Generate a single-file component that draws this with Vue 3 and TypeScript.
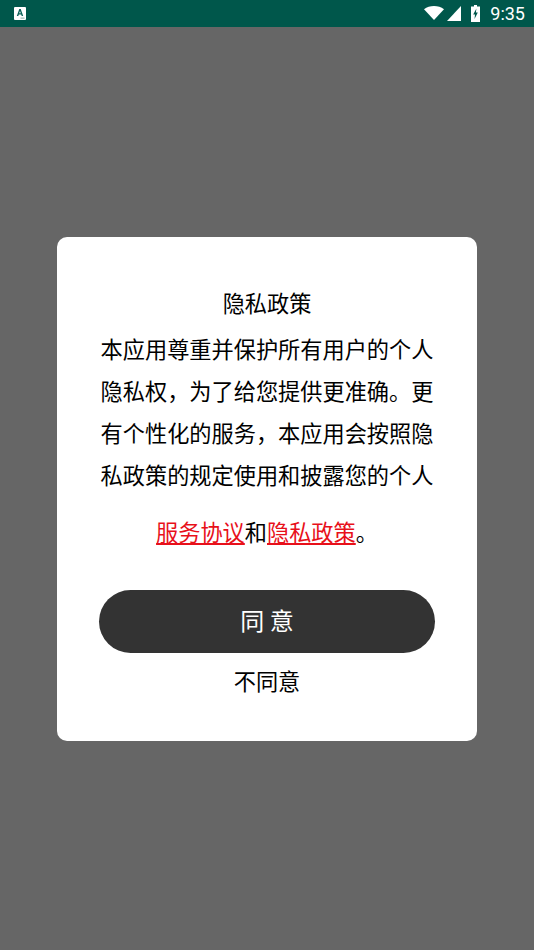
<script setup lang="ts">
const lines: string[] = [
  '本应用尊重并保护所有用户的个人',
  '隐私权，为了给您提供更准确。更',
  '有个性化的服务，本应用会按照隐',
  '私政策的规定使用和披露您的个人',
]
</script>

<template>
  <div class="screen">
    <header class="status">
      <span class="notif">
        <svg width="12" height="13" viewBox="0 0 12 13">
          <rect x="0" y="0" width="12" height="13" rx="1" fill="#fff" />
          <path d="M2.8 9 L5.3 2 H6.7 L9.2 9 H7.7 L7.2 7.5 H4.8 L4.3 9 Z M5.2 6.2 H6.8 L6 3.9 Z" fill="#0a5f57" fill-rule="evenodd" />
          <rect x="6.5" y="10.6" width="4" height="1" fill="#8aa8a4" />
        </svg>
      </span>
      <span class="right">
        <svg class="wifi" width="20" height="14" viewBox="0 0 20 14">
          <path d="M0 3.2 C5.6 -1 14.4 -1 20 3.2 L10 14 Z" fill="#fff" />
        </svg>
        <svg class="signal" width="14" height="15" viewBox="0 0 14 15">
          <path d="M14 0 V15 H0 Z" fill="#fff" />
        </svg>
        <svg class="battery" width="9" height="17" viewBox="0 0 9 17">
          <path d="M3 0 H6 V1.5 H9 V17 H0 V1.5 H3 Z" fill="#fff" />
          <path d="M5.4 3.5 L2.2 9.6 H4 L3.5 14 L6.8 7.6 H4.9 Z" fill="#00574b" />
        </svg>
        <span class="time">9:35</span>
      </span>
    </header>
    <main class="overlay">
      <section class="card">
        <h1 class="title">隐私政策</h1>
        <div class="body">
          <p v-for="line in lines" :key="line" class="line">{{ line }}</p>
        </div>
        <p class="links"><a class="link">服务协议</a>和<a class="link">隐私政策</a>。</p>
        <button class="agree">同 意</button>
        <button class="decline">不同意</button>
      </section>
    </main>
  </div>
</template>

<style>
html, body { margin: 0; padding: 0; }
</style>

<style scoped>
.screen {
  width: 534px;
  height: 950px;
  display: flex;
  flex-direction: column;
  overflow: hidden;
  font-family: "Noto Sans CJK SC", "Noto Sans", sans-serif;
}
.status {
  height: 27px;
  flex: none;
  background: #00574b;
  display: flex;
  align-items: center;
  justify-content: space-between;
  padding: 0 9px 0 14px;
  box-sizing: border-box;
}
.notif { display: flex; }
.right { display: flex; align-items: center; }
.wifi { margin-right: 3px; margin-top: -1px; }
.signal { margin-right: 10px; }
.battery { margin-right: 10px; }
.time {
  font-family: Roboto, sans-serif;
  font-size: 18px;
  font-weight: 400;
  color: #fff;
}
.overlay {
  flex: 1;
  background: #666666;
  display: flex;
  align-items: center;
  justify-content: center;
}
.card {
  width: 420px;
  height: 504px;
  box-sizing: border-box;
  background: #fff;
  border-radius: 10px;
  padding: 44px 42px 0;
  display: flex;
  flex-direction: column;
  align-items: center;
  color: #000;
}
.title {
  margin: 0;
  font-size: 22.2px;
  font-weight: 400;
  line-height: 42px;
}
.body { margin-top: 4px; width: 100%; }
.line {
  margin: 0;
  font-size: 22.2px;
  font-weight: 400;
  line-height: 42px;
  text-align: center;
  white-space: nowrap;
}
.links {
  margin: 15px 0 0;
  font-size: 22.2px;
  font-weight: 400;
  line-height: 42px;
  white-space: nowrap;
}
.link {
  color: #e8101a;
  text-decoration: underline;
  text-decoration-thickness: 1.5px;
  text-underline-offset: 2px;
}
.agree {
  margin-top: 38px;
  width: 336px;
  height: 63px;
  flex: none;
  border: none;
  border-radius: 32px;
  background: #333333;
  color: #fff;
  font-family: inherit;
  font-size: 24px;
  font-weight: 400;
  padding: 0 0 4px;
}
.decline {
  margin-top: 6px;
  border: none;
  background: none;
  padding: 0;
  color: #000;
  font-family: inherit;
  font-size: 22.2px;
  font-weight: 400;
  line-height: 42px;
}
</style>
